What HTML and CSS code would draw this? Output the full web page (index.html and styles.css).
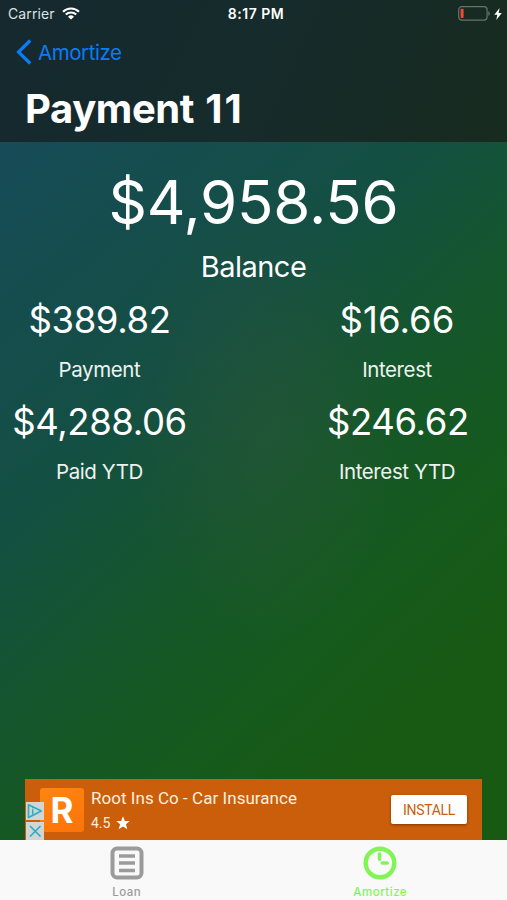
FILE: index.html
```html
<!DOCTYPE html>
<html lang="en">
<head>
    <meta charset="UTF-8">
    <meta name="viewport" content="width=device-width, initial-scale=1.0">
    <title>Payment 11</title>
    <link rel="stylesheet" href="styles.css">
</head>
<body>

    <header class="header">
        <div class="status-bar">
            <div class="status-left">
                <span class="carrier">Carrier</span>
                <svg class="wifi" width="18" height="13" viewBox="0 0 18 13">
                    <path d="M1 4.8a11.5 11.5 0 0 1 16 0M3.8 7.6a7.4 7.4 0 0 1 10.4 0" fill="none" stroke="#fff" stroke-width="2.1"/>
                    <path d="M9 12.6 6 9.7a4.3 4.3 0 0 1 6 0z" fill="#fff"/>
                </svg>
            </div>
            <span class="time">8:17 PM</span>
            <div class="status-right">
                <svg width="32" height="15" viewBox="0 0 32 15">
                    <rect x=".7" y=".7" width="28.4" height="13.4" rx="3" fill="none" stroke="#66736e" stroke-width="1.2"/>
                    <rect x="2.6" y="2.8" width="3" height="9.2" rx="1" fill="#f04a35"/>
                    <path d="M30.3 5v5q1.5-.8 1.5-2.5T30.3 5z" fill="#66736e"/>
                </svg>
                <svg width="8" height="12" viewBox="0 0 8 12">
                    <path d="M5.6 0 .3 6.8h3L2.3 12 7.8 4.9H4.6z" fill="#fff"/>
                </svg>
            </div>
        </div>
        <a class="back">
            <svg width="16" height="26" viewBox="0 0 16 26">
                <path d="M14.2 1.5 2.5 13l11.7 11.5" fill="none" stroke="#087df5" stroke-width="3.2"/>
            </svg>
            <span>Amortize</span>
        </a>
        <h1>Payment <span class="number">11</span></h1>
    </header>

    <main class="details">
        <div class="balance">
            <div class="balance-value">$4,958.56</div>
            <div class="balance-label">Balance</div>
        </div>
        <div class="stats">
            <div class="stat">
                <div class="stat-value">$389.82</div>
                <div class="stat-label">Payment</div>
            </div>
            <div class="stat">
                <div class="stat-value short">$16.66</div>
                <div class="stat-label">Interest</div>
            </div>
            <div class="stat">
                <div class="stat-value">$4,288.06</div>
                <div class="stat-label">Paid YTD</div>
            </div>
            <div class="stat">
                <div class="stat-value">$246.62</div>
                <div class="stat-label">Interest YTD</div>
            </div>
        </div>
    </main>

    <div class="ad">
        <div class="ad-badges">
            <svg width="18" height="18" viewBox="0 0 18 18">
                <path d="M2.5 2.8v12.6L15.3 9.1z" fill="none" stroke="#2badc9" stroke-width="1.7" stroke-linejoin="round"/>
                <path d="M6.7 7.3v5.2" stroke="#2badc9" stroke-width="1.6"/>
                <circle cx="6.7" cy="5.5" r=".9" fill="#2badc9"/>
            </svg>
            <svg width="18" height="18" viewBox="0 0 18 18">
                <path d="m4 4 10.5 10.5M14.5 4 4 14.5" stroke="#2badc9" stroke-width="1.7"/>
            </svg>
        </div>
        <div class="ad-logo">R</div>
        <div class="ad-text">
            <div class="ad-title">Root Ins Co - Car Insurance</div>
            <div class="ad-rating">
                <span>4.5</span>
                <svg width="14" height="14" viewBox="0 0 14 14">
                    <path d="m7 .2 1.8 4.7 5 .2-3.9 3.2 1.4 5L7 10.5l-4.3 2.8 1.4-5L.2 5.1l5-.2z" fill="#fff"/>
                </svg>
            </div>
        </div>
        <button class="install">INSTALL</button>
    </div>

    <nav class="tabs">
        <a class="tab">
            <svg width="34" height="34" viewBox="0 0 34 34">
                <rect x="2.5" y="2.5" width="29" height="29" rx="4.5" fill="none" stroke="#9b9b9b" stroke-width="4"/>
                <path d="M9 10h16M9 17h16M9 24.5h16" stroke="#9b9b9b" stroke-width="3.6"/>
            </svg>
            <span>Loan</span>
        </a>
        <a class="tab active">
            <svg width="34" height="34" viewBox="0 0 34 34">
                <circle cx="17" cy="17" r="14.3" fill="none" stroke="#82f556" stroke-width="4.4"/>
                <path d="M16.5 8v5.3M19.3 17h5" stroke="#82f556" stroke-width="3.5" stroke-linecap="round"/>
            </svg>
            <span>Amortize</span>
        </a>
    </nav>

</body>
</html>
```

FILE: styles.css
```css
* {
    box-sizing: border-box;
}

body {
    font-family: Inter, "Liberation Sans", sans-serif;
    margin: 0;
    height: 900px;
    display: flex;
    flex-direction: column;
    overflow: hidden;
    color: #fff;
    background:
        radial-gradient(ellipse 140px 230px at 264px 420px, rgba(55, 85, 60, 0.35), transparent),
        linear-gradient(137deg, #164b58 10%, #144f43 38%, #155729 56%, #165a1d 68%, #185a14 80%);
}

/* Header */
.header {
    height: 142px;
    flex: none;
    background: linear-gradient(115deg, #15292f 0%, #162b2b 50%, #172b1f 100%);
}

.status-bar {
    display: grid;
    grid-template-columns: 1fr auto 1fr;
    align-items: center;
    height: 27px;
    padding: 0 5px 0 8px;
    font-size: 14px;
}

.status-left,
.status-right {
    display: flex;
    align-items: center;
}

.status-left {
    gap: 7px;
}

.status-right {
    justify-content: flex-end;
    gap: 4px;
}

.carrier {
    color: #dde2e3;
    letter-spacing: 0.1px;
}

.time {
    padding-left: 2px;
    font-weight: 600;
    letter-spacing: 0.5px;
}

.back {
    display: flex;
    align-items: center;
    gap: 6px;
    height: 50px;
    padding-left: 16px;
    color: #087df5;
    font-size: 20.5px;
    letter-spacing: -0.45px;
}

h1 {
    margin: 8px 0 0 25px;
    font-size: 40px;
    line-height: 48px;
    font-weight: 700;
    letter-spacing: -0.4px;
}

.number {
    margin-left: 2px;
    letter-spacing: 2px;
}

/* Payment details */
.details {
    flex: 1;
    text-align: center;
}

.balance-value {
    margin-top: 24px;
    font-size: 60px;
    line-height: 72px;
    letter-spacing: -0.2px;
}

.balance-label {
    margin-top: 11px;
    font-size: 29px;
    line-height: 36px;
    letter-spacing: -0.5px;
}

.stats {
    display: grid;
    grid-template-columns: 175px 140px;
    justify-content: space-between;
    padding: 0 40px 0 12px;
    margin-top: 12px;
}

.stat {
    height: 102px;
}

.stat-value {
    font-size: 36.5px;
    line-height: 46px;
    letter-spacing: -0.4px;
    white-space: nowrap;
}

.stat-value.short {
    letter-spacing: 0.1px;
}

.stat-label {
    margin-top: 14px;
    font-size: 20.5px;
    line-height: 26px;
    letter-spacing: -0.4px;
    color: #edf3ee;
}

/* Ad banner */
.ad {
    position: relative;
    display: flex;
    flex: none;
    height: 61px;
    margin: 0 25px;
    padding: 9px 15px 0 15px;
    background: #ca5e0b;
    font-family: Roboto, sans-serif;
}

.ad-badges {
    position: absolute;
    left: 1px;
    bottom: 0;
    display: flex;
    flex-direction: column;
    gap: 2px;
}

.ad-badges svg {
    background: #d2d5d2;
}

.ad-logo {
    width: 44px;
    height: 44px;
    border-radius: 3px;
    background: linear-gradient(160deg, #ff850f, #fc730a);
    font-family: Inter, sans-serif;
    font-size: 35px;
    font-weight: 700;
    line-height: 44px;
    text-align: center;
}

.ad-text {
    flex: 1;
    margin-left: 7px;
    color: #fff0df;
}

.ad-title {
    font-size: 17px;
    line-height: 21px;
    letter-spacing: 0.04px;
}

.ad-rating {
    display: flex;
    align-items: center;
    gap: 6px;
    margin-top: 5px;
    font-size: 14px;
    line-height: 18px;
}

.install {
    width: 76px;
    height: 29px;
    margin-top: 7px;
    padding: 0;
    border: 0;
    border-radius: 2px;
    background: #fff;
    box-shadow: 0 1px 3px rgba(80, 30, 0, 0.6);
    color: #ca5e0b;
    font-family: Roboto, sans-serif;
    font-size: 14px;
    letter-spacing: -0.3px;
}

/* Tab bar */
.tabs {
    display: grid;
    grid-template-columns: 1fr 1fr;
    flex: none;
    height: 60px;
    background: #f9f9f9;
}

.tab {
    display: flex;
    flex-direction: column;
    align-items: center;
    padding-top: 6px;
    color: #9b9b9b;
    font-size: 11.5px;
    font-weight: 500;
    line-height: 14px;
    letter-spacing: 0.5px;
}

.tab span {
    margin-top: 5px;
}

.tab.active {
    color: #82f556;
}
```
